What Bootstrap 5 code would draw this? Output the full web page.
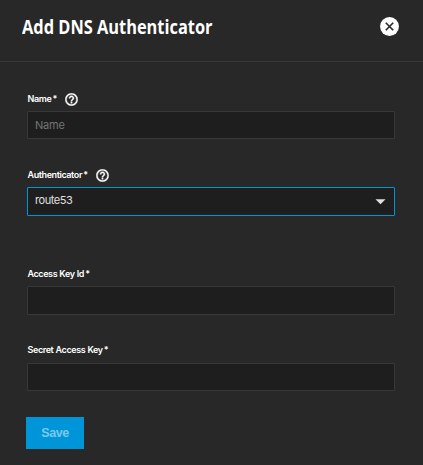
<!DOCTYPE html>
<html lang="en" data-bs-theme="dark">
<head>
<meta charset="utf-8">
<meta name="viewport" content="width=device-width, initial-scale=1">
<title>Add DNS Authenticator</title>
<link href="https://cdn.jsdelivr.net/npm/bootstrap@5.3.0/dist/css/bootstrap.min.css" rel="stylesheet">
<style>
body{background:#282828;color:#fff;font-family:Inter,"Liberation Sans",sans-serif;height:465px;overflow:hidden}
.panel-head{height:62px;border-bottom:1px solid #383838;padding:0 24px 8px 22px}
.panel-title{font:700 19px/24px "Open Sans","Noto Sans",sans-serif;white-space:nowrap;transform:scaleX(.862);transform-origin:0 50%}
.close-btn{width:19px;height:19px}
.dns-form{padding:30px 28px 0 27px}
.field-label{font-size:9px;font-weight:600;line-height:14px;height:14px;margin-bottom:5px;letter-spacing:-.4px;word-spacing:.3px;padding-left:.5px}
.help-icon{margin-left:8px}
.form-control.field,.form-select.field{height:29px;padding:0 7px;border:1px solid #383838;border-radius:1px;background:#1e1e1e;color:#e0e0e0;font-size:11px;line-height:26px;letter-spacing:-.45px;box-shadow:none}
.form-control.field::placeholder{color:#757575;opacity:1;letter-spacing:-.2px}
.form-select.field{border-color:#0095d5;padding-bottom:2px;line-height:25px}
.f-name{height:76px}
.f-name .form-control.field{height:28px;line-height:25px}
.f-auth{height:99px}
.f-key{height:76px}
.f-secret{height:74px}
.f-secret .field-label{margin-bottom:6px}
.f-secret .form-control.field{height:28px}
.caret{right:9.5px;top:12px;pointer-events:none}
.save-btn{width:58px;height:32px;margin-left:-1px;background:#0095d9!important;color:#7bc9ed!important;font:700 12.5px/33px "Liberation Sans",sans-serif;letter-spacing:-.4px;opacity:1!important}
</style>
<script src="https://cdn.jsdelivr.net/npm/bootstrap@5.3.0/dist/js/bootstrap.bundle.min.js"></script>
</head>
<body>
<header class="panel-head d-flex align-items-center justify-content-between">
  <h1 class="panel-title m-0">Add DNS Authenticator</h1>
  <button class="close-btn btn p-0 border-0 d-flex" type="button" aria-label="Close">
    <svg width="19" height="19" viewBox="0 0 20 20"><circle cx="10" cy="10" r="9.900" fill="#fff"/><path d="M6.100 6.100l7.800 7.800M13.900 6.100l-7.800 7.800" stroke="#282828" stroke-width="1.700"/></svg>
  </button>
</header>
<form class="dns-form">
  <div class="f-name">
    <label class="field-label d-flex align-items-center" for="name"><span>Name&#8201;*</span>
      <svg class="help-icon" width="13" height="13" viewBox="1.5 1.5 21 21" fill="#fff"><path d="M11 18h2v-2h-2v2zm1-16C6.480 2 2 6.480 2 12s4.480 10 10 10 10-4.480 10-10S17.520 2 12 2zm0 18c-4.410 0-8-3.590-8-8s3.590-8 8-8 8 3.590 8 8-3.590 8-8 8zm0-14c-2.210 0-4 1.790-4 4h2c0-1.100.9-2 2-2s2 .9 2 2c0 2-3 1.750-3 5h2c0-2.250 3-2.500 3-5 0-2.210-1.790-4-4-4z" stroke="#fff" stroke-width=".7"/></svg>
    </label>
    <input class="form-control field" id="name" placeholder="Name">
  </div>
  <div class="f-auth">
    <label class="field-label d-flex align-items-center" for="auth"><span>Authenticator&#8201;*</span>
      <svg class="help-icon" width="13" height="13" viewBox="1.5 1.5 21 21" fill="#fff"><path d="M11 18h2v-2h-2v2zm1-16C6.480 2 2 6.480 2 12s4.480 10 10 10 10-4.480 10-10S17.520 2 12 2zm0 18c-4.410 0-8-3.590-8-8s3.590-8 8-8 8 3.590 8 8-3.590 8-8 8zm0-14c-2.210 0-4 1.790-4 4h2c0-1.100.9-2 2-2s2 .9 2 2c0 2-3 1.750-3 5h2c0-2.250 3-2.500 3-5 0-2.210-1.790-4-4-4z" stroke="#fff" stroke-width=".7"/></svg>
    </label>
    <div class="position-relative">
      <select class="form-select field" id="auth"><option>route53</option></select>
      <svg class="caret position-absolute" width="11" height="6" viewBox="0 0 11 6"><path d="M.5.3h10L5.500 5.300z" fill="#e0e0e0"/></svg>
    </div>
  </div>
  <div class="f-key">
    <label class="field-label d-flex align-items-center" for="key">Access Key Id&#8201;*</label>
    <input class="form-control field" id="key">
  </div>
  <div class="f-secret">
    <label class="field-label d-flex align-items-center" for="secret">Secret Access Key&#8201;*</label>
    <input class="form-control field" id="secret">
  </div>
  <button class="save-btn btn border-0 rounded-0 p-0" type="button" disabled>Save</button>
</form>
</body>
</html>
